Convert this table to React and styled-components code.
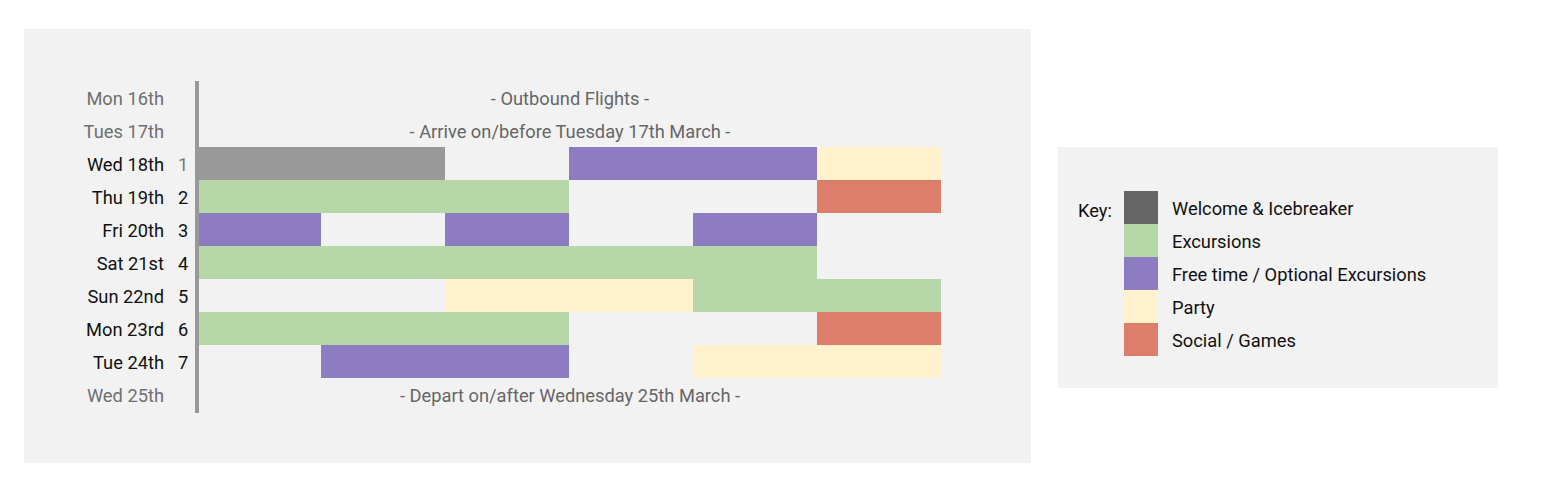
import React from "react";
import styled, { createGlobalStyle } from "styled-components";

const GlobalStyle = createGlobalStyle`
  body {
    margin: 0;
    background: #ffffff;
    font-family: Roboto, "Liberation Sans", sans-serif;
  }
`;

const COLORS = {
  welcome: "#999999",
  welcomeKey: "#666666",
  excursion: "#b6d7a8",
  free: "#8e7cc3",
  party: "#fff2cc",
  social: "#dd7e6b",
  none: "transparent",
};

const Page = styled.div`
  display: flex;
  align-items: flex-start;
  gap: 27px;
  padding: 29px 0 0 24px;
`;

const Schedule = styled.div`
  width: 1007px;
  height: 434px;
  box-sizing: border-box;
  padding: 52px 0;
  background: #f2f2f2;
`;

const Row = styled.div`
  display: grid;
  grid-template-columns: 140px 31px 746px;
  height: 33px;
  font-size: 18.3px;
  line-height: 35px;
`;

const DayLabel = styled.div`
  text-align: right;
  white-space: nowrap;
  color: ${(p) => (p.$muted ? "#6f6f6f" : "#111111")};
`;

const DayNum = styled.div`
  padding-left: 14px;
  color: ${(p) => (p.$muted ? "#7a7a7a" : "#111111")};
`;

const Track = styled.div`
  display: grid;
  grid-template-columns: 122px repeat(5, 124px);
  grid-template-rows: 33px;
  border-left: 4px solid #999999;
`;

const Block = styled.div`
  grid-column: span ${(p) => p.$span};
  background: ${(p) => COLORS[p.$kind]};
`;

const Note = styled.div`
  grid-column: 1 / -1;
  text-align: center;
  white-space: nowrap;
  color: #666666;
`;

const Legend = styled.div`
  margin-top: 118px;
  width: 440px;
  height: 241px;
  box-sizing: border-box;
  padding: 44px 0 0 20px;
  background: #f2f2f2;
  display: grid;
  grid-template-columns: 46px 34px auto;
  grid-auto-rows: 33px;
  font-size: 18.3px;
  line-height: 35px;
  color: #111111;
`;

const KeyTitle = styled.div`
  grid-column: 1;
  grid-row: 1;
  padding-top: 2px;
`;

const Swatch = styled.div`
  grid-column: 2;
  background: ${(p) => COLORS[p.$kind]};
`;

const SwatchLabel = styled.div`
  grid-column: 3;
  padding-left: 14px;
  white-space: nowrap;
`;

const days = [
  { label: "Mon 16th", muted: true, note: "- Outbound Flights -" },
  { label: "Tues 17th", muted: true, note: "- Arrive on/before Tuesday 17th March -" },
  { label: "Wed 18th", num: 1, mutedNum: true, blocks: [["welcome", 2], ["none", 1], ["free", 2], ["party", 1]] },
  { label: "Thu 19th", num: 2, blocks: [["excursion", 3], ["none", 2], ["social", 1]] },
  { label: "Fri 20th", num: 3, blocks: [["free", 1], ["none", 1], ["free", 1], ["none", 1], ["free", 1], ["none", 1]] },
  { label: "Sat 21st", num: 4, blocks: [["excursion", 5], ["none", 1]] },
  { label: "Sun 22nd", num: 5, blocks: [["none", 2], ["party", 2], ["excursion", 2]] },
  { label: "Mon 23rd", num: 6, blocks: [["excursion", 3], ["none", 2], ["social", 1]] },
  { label: "Tue 24th", num: 7, blocks: [["none", 1], ["free", 2], ["none", 1], ["party", 2]] },
  { label: "Wed 25th", muted: true, note: "- Depart on/after Wednesday 25th March -" },
];

const key = [
  ["welcomeKey", "Welcome & Icebreaker"],
  ["excursion", "Excursions"],
  ["free", "Free time / Optional Excursions"],
  ["party", "Party"],
  ["social", "Social / Games"],
];

const App = () => {
  return (
    <>
      <GlobalStyle />
      <Page>
        <Schedule>
          {days.map((d) => (
            <Row key={d.label}>
              <DayLabel $muted={d.muted}>{d.label}</DayLabel>
              <DayNum $muted={d.mutedNum}>{d.num}</DayNum>
              <Track>
                {d.note ? (
                  <Note>{d.note}</Note>
                ) : (
                  d.blocks.map(([kind, span], i) => (
                    <Block key={i} $kind={kind} $span={span} />
                  ))
                )}
              </Track>
            </Row>
          ))}
        </Schedule>
        <Legend>
          <KeyTitle>Key:</KeyTitle>
          {key.map(([kind, text]) => (
            <React.Fragment key={kind}>
              <Swatch $kind={kind} />
              <SwatchLabel>{text}</SwatchLabel>
            </React.Fragment>
          ))}
        </Legend>
      </Page>
    </>
  );
};

export default App;
